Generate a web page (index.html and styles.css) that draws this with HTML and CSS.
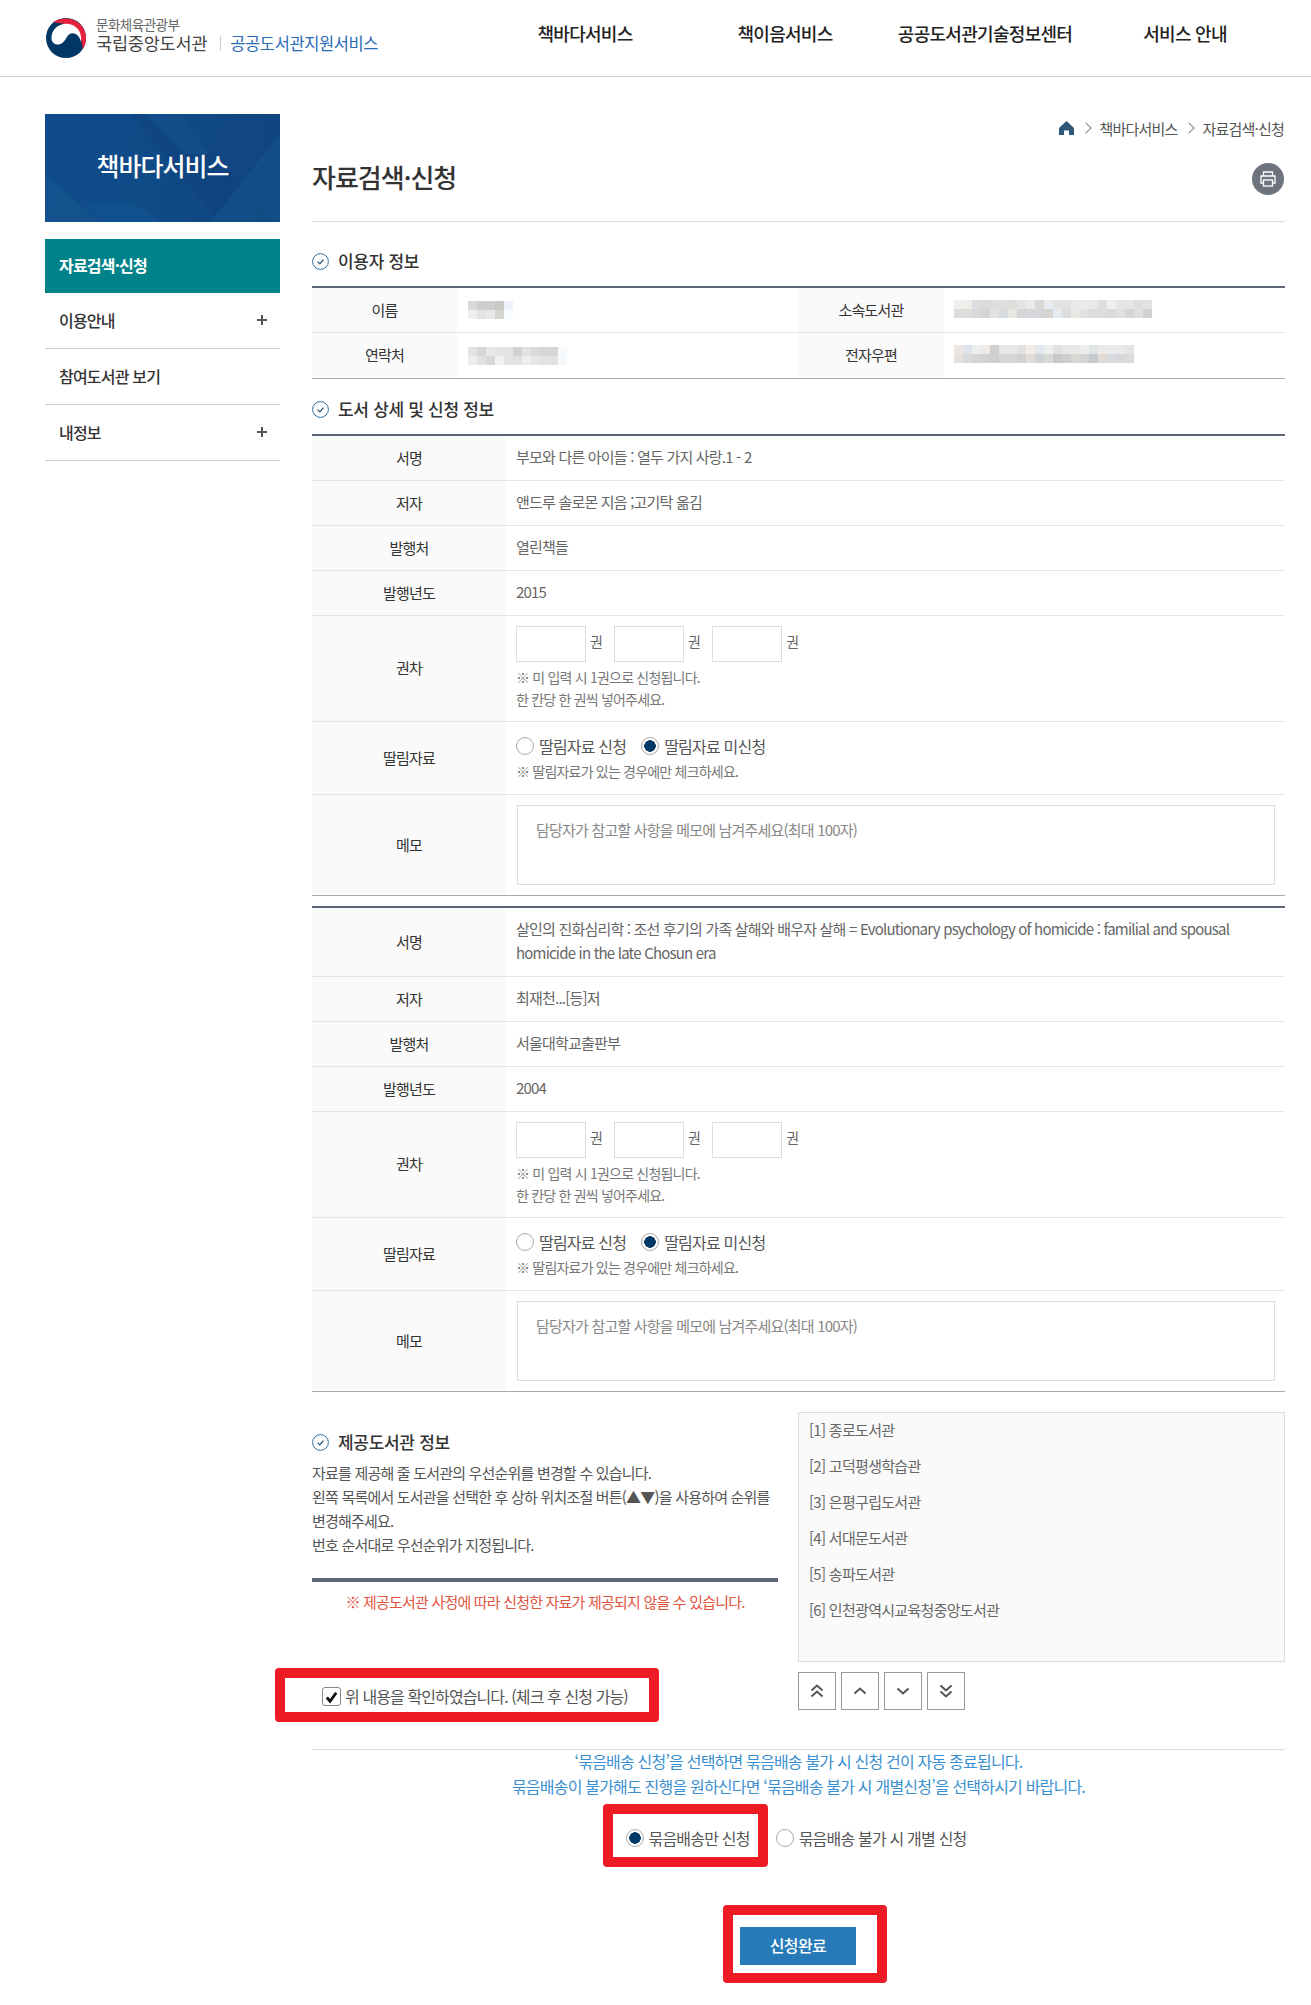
FILE: index.html
```html
<!DOCTYPE html>
<html lang="ko">
<head>
    <meta charset="UTF-8">
    <meta name="viewport" content="width=device-width, initial-scale=1.0">
    <title>자료검색·신청 - 책바다서비스</title>
    <link rel="stylesheet" href="styles.css">
</head>
<body>
<div class="page">
    <header class="header">
        <a class="logo" href="#">
            <svg class="emblem" viewBox="0 0 42 40" width="42" height="40">
                <circle cx="21" cy="20" r="20" fill="#003764"/>
                <path d="M8 4.5 C14 0 23 -1 30 2.5 C37 6 41 13 41 20 C41 25 39.5 29 37.5 31.5 C38 22 33 12 25 8 C19 5 13 5 8 4.5 Z" fill="#e6213c"/>
                <path d="M6.5 21 C6 12 13 5.5 22 5.8 C31 6.2 37.5 13.5 36 24 C34.5 16.5 28 13.5 24 16.5 C21 19 20 25 14 26.5 C10 27 7 24.5 6.5 21 Z" fill="#fff"/>
            </svg>
            <span class="logo-text">
                <span class="logo-sup">문화체육관광부</span>
                <span class="logo-main">국립중앙도서관</span>
            </span>
            <span class="logo-sub">공공도서관지원서비스</span>
        </a>
        <nav class="gnb">
            <a href="#">책바다서비스</a>
            <a href="#">책이음서비스</a>
            <a href="#">공공도서관기술정보센터</a>
            <a href="#">서비스 안내</a>
        </nav>
    </header>

    <div class="wrap">
        <aside class="side">
            <div class="side-banner">
                <svg class="side-art" viewBox="0 0 235 108" width="235" height="108" preserveAspectRatio="none">
                    <polygon points="85,0 130,0 235,108 175,108" fill="#0e3f7a" opacity="0.4"/>
                    <polygon points="100,0 135,0 165,40 140,40" fill="#12548f" opacity="0.6"/>
                    <polygon points="0,108 0,60 55,108" fill="#15578f" opacity="0.6"/>
                    <polygon points="40,90 90,90 118,108 55,108" fill="#11528f" opacity="0.7"/>
                    <polygon points="235,20 235,108 165,108" fill="#125189" opacity="0.7"/>
                </svg>
                <span>책바다서비스</span>
            </div>
            <ul class="side-menu">
                <li class="on"><a href="#">자료검색·신청</a></li>
                <li><a href="#">이용안내<span class="plus"></span></a></li>
                <li><a href="#">참여도서관 보기</a></li>
                <li><a href="#">내정보<span class="plus"></span></a></li>
            </ul>
        </aside>

        <main class="main">
            <div class="crumb">
                <svg viewBox="0 0 15 14" width="15" height="14"><path d="M7.5 0 L15 7 V14 H10 V9.5 H5 V14 H0 V7 Z" fill="#2f5878"/></svg>
                <i class="crumb-arrow"></i>
                <span>책바다서비스</span>
                <i class="crumb-arrow"></i>
                <span>자료검색·신청</span>
            </div>
            <div class="title-row">
                <h1>자료검색·신청</h1>
                <button class="print" type="button" title="인쇄">
                    <svg viewBox="0 0 16 16" width="16" height="16" fill="none" stroke="#fff" stroke-width="1.3">
                        <path d="M3.5 5 V1 H12.5 V5"/>
                        <path d="M3.5 12 H1 V5 H15 V12 H12.5"/>
                        <rect x="3.5" y="9" width="9" height="6"/>
                    </svg>
                </button>
            </div>

            <h2 class="sec-head sec-first"><svg class="tick" viewBox="0 0 17 17" width="17" height="17" fill="none"><circle cx="8.5" cy="8.5" r="7.9" stroke="#2b6f9f" stroke-width="1"/><path d="M5.6 8.6 L7.8 10.8 L11.5 6.6" stroke="#1b4f78" stroke-width="1.2"/></svg>이용자 정보</h2>
            <table class="tbl tbl-user">
                <colgroup><col class="c-user-th"><col class="c-user-td"><col class="c-user-th2"><col></colgroup>
                <tr class="r-45">
                    <th>이름</th><td class="td-form td-user"><span class="mosaic m-name"></span></td>
                    <th>소속도서관</th><td class="td-form td-user"><span class="mosaic m-lib"></span></td>
                </tr>
                <tr class="r-46 last">
                    <th>연락처</th><td class="td-form td-user"><span class="mosaic m-tel"></span></td>
                    <th>전자우편</th><td class="td-form td-user"><span class="mosaic m-mail"></span></td>
                </tr>
            </table>

            <h2 class="sec-head sec-second"><svg class="tick" viewBox="0 0 17 17" width="17" height="17" fill="none"><circle cx="8.5" cy="8.5" r="7.9" stroke="#2b6f9f" stroke-width="1"/><path d="M5.6 8.6 L7.8 10.8 L11.5 6.6" stroke="#1b4f78" stroke-width="1.2"/></svg>도서 상세 및 신청 정보</h2>
            <table class="tbl tbl-book">
                <colgroup><col class="c-book-th"><col></colgroup>
                <tr class="r-45"><th>서명</th><td>부모와 다른 아이들 : 열두 가지 사랑.1 - 2</td></tr>
                <tr class="r-45"><th>저자</th><td>앤드루 솔로몬 지음 ;고기탁 옮김</td></tr>
                <tr class="r-45"><th>발행처</th><td>열린책들</td></tr>
                <tr class="r-45"><th>발행년도</th><td>2015</td></tr>
                <tr class="r-106">
                    <th>권차</th>
                    <td class="td-form">
                        <div class="vols">
                            <label><input type="text"> 권</label>
                            <label><input type="text"> 권</label>
                            <label><input type="text"> 권</label>
                        </div>
                        <p class="note">※ 미 입력 시 1권으로 신청됩니다.<br>한 칸당 한 권씩 넣어주세요.</p>
                    </td>
                </tr>
                <tr class="r-73">
                    <th>딸림자료</th>
                    <td class="td-form">
                        <div class="radios">
                            <label><span class="radio"></span>딸림자료 신청</label>
                            <label><span class="radio on"></span>딸림자료 미신청</label>
                        </div>
                        <p class="note note-tight">※ 딸림자료가 있는 경우에만 체크하세요.</p>
                    </td>
                </tr>
                <tr class="r-101 last">
                    <th>메모</th>
                    <td class="td-form"><textarea placeholder="담당자가 참고할 사항을 메모에 남겨주세요(최대 100자)"></textarea></td>
                </tr>
            </table>

            <table class="tbl tbl-book tbl-next">
                <colgroup><col class="c-book-th"><col></colgroup>
                <tr class="r-69"><th>서명</th><td>살인의 진화심리학 : 조선 후기의 가족 살해와 배우자 살해 = Evolutionary psychology of homicide : familial and spousal homicide in the late Chosun era</td></tr>
                <tr class="r-45"><th>저자</th><td>최재천...[등]저</td></tr>
                <tr class="r-45"><th>발행처</th><td>서울대학교출판부</td></tr>
                <tr class="r-45"><th>발행년도</th><td>2004</td></tr>
                <tr class="r-106">
                    <th>권차</th>
                    <td class="td-form">
                        <div class="vols">
                            <label><input type="text"> 권</label>
                            <label><input type="text"> 권</label>
                            <label><input type="text"> 권</label>
                        </div>
                        <p class="note">※ 미 입력 시 1권으로 신청됩니다.<br>한 칸당 한 권씩 넣어주세요.</p>
                    </td>
                </tr>
                <tr class="r-73">
                    <th>딸림자료</th>
                    <td class="td-form">
                        <div class="radios">
                            <label><span class="radio"></span>딸림자료 신청</label>
                            <label><span class="radio on"></span>딸림자료 미신청</label>
                        </div>
                        <p class="note note-tight">※ 딸림자료가 있는 경우에만 체크하세요.</p>
                    </td>
                </tr>
                <tr class="r-101 last">
                    <th>메모</th>
                    <td class="td-form"><textarea placeholder="담당자가 참고할 사항을 메모에 남겨주세요(최대 100자)"></textarea></td>
                </tr>
            </table>

            <section class="provider">
                <div class="provider-left">
                    <h2 class="sec-head sec-third"><svg class="tick" viewBox="0 0 17 17" width="17" height="17" fill="none"><circle cx="8.5" cy="8.5" r="7.9" stroke="#2b6f9f" stroke-width="1"/><path d="M5.6 8.6 L7.8 10.8 L11.5 6.6" stroke="#1b4f78" stroke-width="1.2"/></svg>제공도서관 정보</h2>
                    <p class="desc">자료를 제공해 줄 도서관의 우선순위를 변경할 수 있습니다.<br>왼쪽 목록에서 도서관을 선택한 후 상하 위치조절 버튼(▲▼)을 사용하여 순위를 변경해주세요.<br>번호 순서대로 우선순위가 지정됩니다.</p>
                    <p class="warn">※ 제공도서관 사정에 따라 신청한 자료가 제공되지 않을 수 있습니다.</p>
                    <label class="agree">
                        <span class="check"><svg viewBox="0 0 18 18" width="18" height="18"><path d="M4 9.5 L7.5 13.5 L14 4.5" fill="none" stroke="#111" stroke-width="3"/></svg></span>
                        위 내용을 확인하였습니다. (체크 후 신청 가능)
                    </label>
                </div>
                <div class="provider-right">
                    <ul class="lib-list">
                        <li>[1] 종로도서관</li>
                        <li>[2] 고덕평생학습관</li>
                        <li>[3] 은평구립도서관</li>
                        <li>[4] 서대문도서관</li>
                        <li>[5] 송파도서관</li>
                        <li>[6] 인천광역시교육청중앙도서관</li>
                    </ul>
                    <div class="order-btns">
                        <button type="button"><svg viewBox="0 0 14 14" width="14" height="14" fill="none" stroke="#555" stroke-width="2"><path d="M1.5 6.5 L7 1.5 L12.5 6.5 M1.5 12.5 L7 7.5 L12.5 12.5"/></svg></button>
                        <button type="button"><svg viewBox="0 0 14 14" width="14" height="14" fill="none" stroke="#555" stroke-width="2"><path d="M1.5 9.5 L7 4.5 L12.5 9.5"/></svg></button>
                        <button type="button"><svg viewBox="0 0 14 14" width="14" height="14" fill="none" stroke="#555" stroke-width="2"><path d="M1.5 4.5 L7 9.5 L12.5 4.5"/></svg></button>
                        <button type="button"><svg viewBox="0 0 14 14" width="14" height="14" fill="none" stroke="#555" stroke-width="2"><path d="M1.5 1.5 L7 6.5 L12.5 1.5 M1.5 7.5 L7 12.5 L12.5 7.5"/></svg></button>
                    </div>
                </div>
            </section>

            <p class="bundle-info">‘묶음배송 신청’을 선택하면 묶음배송 불가 시 신청 건이 자동 종료됩니다.<br>묶음배송이 불가해도 진행을 원하신다면 ‘묶음배송 불가 시 개별신청’을 선택하시기 바랍니다.</p>
            <div class="radios bundle-radios">
                <label><span class="radio on"></span>묶음배송만 신청</label>
                <label><span class="radio"></span>묶음배송 불가 시 개별 신청</label>
            </div>
            <div class="submit-row"><button class="submit" type="button">신청완료</button></div>
        </main>
    </div>

    <!-- 빨간 표시 -->
    <div class="mark mark-agree"></div>
    <div class="mark mark-bundle"></div>
    <div class="mark mark-submit"></div>
</div>
</body>
</html>
```

FILE: styles.css
```css
* {
    box-sizing: border-box;
}

body {
    margin: 0;
    background: #fff;
    font-family: "Noto Sans CJK KR", "Noto Sans", sans-serif;
    font-size: 15px;
    color: #555;
    letter-spacing: -0.8px;
}

a {
    color: inherit;
    text-decoration: none;
}

.page {
    position: relative;
    width: 1311px;
    height: 2005px;
    overflow: hidden;
}

/* header */
.header {
    display: flex;
    align-items: center;
    height: 77px;
    padding: 0 26px 8px 45px;
    border-bottom: 1px solid #ccc;
}

.logo {
    display: flex;
    align-items: center;
}

.emblem {
    margin: 8px 9px 0 0;
}

.logo-text {
    display: flex;
    flex-direction: column;
    margin-top: 1px;
}

.logo-sup {
    font-size: 13.5px;
    line-height: 15px;
    color: #666;
    letter-spacing: -0.5px;
}

.logo-main {
    font-size: 17.5px;
    line-height: 21px;
    color: #444;
    letter-spacing: -0.2px;
}

.logo-sub {
    margin: 18px 0 0 13px;
    padding-left: 9px;
    font-size: 16.5px;
    line-height: 15px;
    color: #2a6bb5;
    letter-spacing: -0.4px;
    border-left: 1px solid #ccc;
}

.gnb {
    display: flex;
    margin: 0 0 2px auto;
}

.gnb a {
    width: 200px;
    text-align: center;
    font-size: 18px;
    font-weight: 500;
    color: #222;
    letter-spacing: -0.7px;
}

/* layout */
.wrap {
    display: flex;
    padding: 37px 26px 0 45px;
}

.side {
    flex: none;
    width: 235px;
    margin-right: 32px;
}

.main {
    flex: 1;
    min-width: 0;
}

/* side */
.side-banner {
    position: relative;
    display: flex;
    align-items: center;
    justify-content: center;
    height: 108px;
    background: linear-gradient(100deg, #104c8d, #0f4a86 50%, #114480);
    color: #fff;
    font-size: 25px;
    font-weight: 500;
    letter-spacing: -1px;
    overflow: hidden;
}

.side-art {
    position: absolute;
    top: 0;
    left: 0;
}

.side-banner span {
    position: relative;
    margin-bottom: 6px;
}

.side-menu {
    margin: 17px 0 0;
    padding: 0;
    list-style: none;
}

.side-menu a {
    display: flex;
    align-items: center;
    justify-content: space-between;
    height: 56px;
    padding: 0 13px 1px 14px;
    font-size: 16px;
    font-weight: 500;
    color: #333;
    border-bottom: 1px solid #ccc;
}

.side-menu li.on a {
    height: 54px;
    padding-bottom: 2px;
    background: #00828a;
    color: #fff;
    font-weight: 700;
    border-bottom: 0;
}

.plus {
    position: relative;
    width: 10px;
    height: 10px;
    background:
        linear-gradient(#555, #555) center / 10px 2px no-repeat,
        linear-gradient(#555, #555) center / 2px 10px no-repeat;
}

/* title */
.crumb {
    display: flex;
    align-items: center;
    justify-content: flex-end;
    height: 28px;
    padding-right: 1px;
    font-size: 15px;
    color: #555;
}

.crumb svg {
    margin-right: 1px;
}

.crumb-arrow {
    width: 8px;
    height: 8px;
    margin: 0 10px 0 7px;
    border-top: 1px solid #888;
    border-right: 1px solid #888;
    transform: rotate(45deg);
}

.title-row {
    display: flex;
    align-items: center;
    justify-content: space-between;
    height: 80px;
    padding-bottom: 5px;
    border-bottom: 1px solid #ddd;
}

.title-row h1 {
    margin: 0 0 6px;
    font-size: 26px;
    font-weight: 500;
    color: #333;
    letter-spacing: -1px;
}

.print {
    display: flex;
    align-items: center;
    justify-content: center;
    width: 32px;
    height: 32px;
    margin-right: 1px;
    padding: 0;
    border: 0;
    border-radius: 50%;
    background: #6d737f;
}

.sec-head {
    display: flex;
    align-items: center;
    height: 50px;
    margin: 0;
    padding-bottom: 2px;
    font-size: 17px;
    font-weight: 500;
    color: #333;
    letter-spacing: -0.3px;
}

.tick {
    margin: 2px 9px 0 0;
}

.sec-first {
    margin-top: 14px;
}

.sec-second {
    margin-top: 5px;
}

.sec-third {
    height: 38px;
    margin-top: 11px;
    padding-bottom: 1px;
}

/* tables */
.tbl {
    width: 100%;
    table-layout: fixed;
    border-collapse: separate;
    border-spacing: 0;
    border-top: 2px solid #5d6579;
}

.tbl th,
.tbl td {
    padding: 0;
    font-weight: 400;
    border-bottom: 1px solid #e6e6e6;
}

.tbl th {
    padding-bottom: 2px;
    background: #fafafa;
    color: #333;
    text-align: center;
}

.tbl td {
    padding: 0 10px 3px 10px;
    line-height: 24px;
    color: #666;
}

.tbl td.td-form {
    padding-bottom: 0;
}

.tbl td.td-user {
    padding-left: 11px;
}

.tbl .r-106 td.td-form {
    padding-bottom: 2px;
}

.tbl .r-101 td.td-form {
    padding-left: 11px;
}

.tbl .last th,
.tbl .last td {
    border-bottom-color: #aaa;
}

.c-user-th { width: 145px; }
.c-user-td { width: 341px; }
.c-user-th2 { width: 146px; }
.c-book-th { width: 194px; }

.r-45 th, .r-45 td { height: 45px; }
.r-46 th, .r-46 td { height: 46px; }
.r-69 th, .r-69 td { height: 69px; }
.r-73 th, .r-73 td { height: 73px; }
.r-101 th, .r-101 td { height: 101px; }
.r-106 th, .r-106 td { height: 106px; }

.tbl-next {
    margin-top: 10px;
}

.vols {
    display: flex;
    gap: 12px;
}

.vols label {
    display: flex;
    gap: 4px;
    align-items: flex-start;
    line-height: 30px;
    font-size: 14px;
}

.vols input {
    width: 70px;
    height: 36px;
    padding: 0;
    border: 1px solid #ddd;
    background: #fff;
}

.note {
    margin: 4px 0 0;
    font-size: 14px;
    line-height: 22px;
    color: #777;
}

.note-tight {
    margin-top: 2px;
}

.radios {
    display: flex;
    gap: 15px;
}

.radios label {
    display: flex;
    align-items: center;
    gap: 5px;
    height: 24px;
    font-size: 16px;
    color: #555;
}

.radio {
    width: 18px;
    height: 18px;
    border: 1px solid #aaa;
    border-radius: 50%;
    background: #fff;
}

.radio.on {
    background: radial-gradient(circle, #003764 0 5.5px, #fff 6px);
}

textarea {
    display: block;
    width: 100%;
    height: 80px;
    padding: 12px 18px;
    border: 1px solid #ddd;
    font-family: inherit;
    font-size: 15px;
    line-height: 24px;
    letter-spacing: -0.8px;
    resize: none;
}

textarea::placeholder {
    color: #888;
    opacity: 1;
}

/* provider */
.provider {
    display: flex;
    gap: 20px;
    padding: 20px 0 39px;
    border-bottom: 1px solid #ddd;
}

.provider-left {
    width: 466px;
}

.provider-right {
    flex: 1;
}

.desc {
    margin: 0;
    line-height: 24px;
    color: #555;
}

.warn {
    margin: 21px 0 0;
    padding-top: 8px;
    border-top: 4px solid #5d6579;
    line-height: 24px;
    color: #e2553f;
    text-align: center;
}

.agree {
    display: flex;
    align-items: center;
    gap: 4px;
    height: 24px;
    margin-top: 70px;
    padding-left: 10px;
    font-size: 16px;
    letter-spacing: -0.9px;
    color: #555;
}

.check {
    display: flex;
    width: 19px;
    height: 19px;
    border: 1px solid #888;
    border-radius: 3px;
}

.lib-list {
    height: 250px;
    margin: 0;
    padding: 0 10px;
    list-style: none;
    background: #fafafa;
    border: 1px solid #ddd;
    letter-spacing: -0.7px;
}

.lib-list li {
    height: 36px;
    line-height: 33px;
    color: #666;
}

.order-btns {
    display: flex;
    gap: 5px;
    margin-top: 10px;
}

.order-btns button {
    display: flex;
    align-items: center;
    justify-content: center;
    width: 38px;
    height: 38px;
    padding: 0;
    border: 1px solid #999;
    background: #fff;
}

/* bundle */
.bundle-info {
    margin: -1px 0 0;
    font-size: 16px;
    line-height: 25px;
    color: #3a8fd0;
    text-align: center;
}

.bundle-radios {
    justify-content: center;
    gap: 26px;
    margin: 27px 5px 0 0;
}

.submit-row {
    display: flex;
    justify-content: center;
    margin-top: 77px;
}

.submit {
    width: 116px;
    height: 38px;
    margin-right: 1px;
    padding: 0 0 2px;
    border: 0;
    background: #277ab8;
    color: #fff;
    font-family: inherit;
    font-size: 16px;
    font-weight: 500;
    letter-spacing: -0.6px;
}

/* red marks */
.mark {
    position: absolute;
    border: 10px solid #ed1c24;
    border-radius: 4px;
}

.mark-agree {
    top: 1668px;
    left: 275px;
    width: 384px;
    height: 54px;
}

.mark-bundle {
    top: 1804px;
    left: 603px;
    width: 165px;
    height: 63px;
}

.mark-submit {
    top: 1905px;
    left: 723px;
    width: 164px;
    height: 78px;
}

/* 블러 처리된 개인정보 */
.mosaic {
    display: block;
    height: 18px;
    background-repeat: no-repeat;
    background-size: 100% 9px;
    background-position: 0 0, 0 9px;
}

.m-name {
    width: 45px;
    background-image:
        linear-gradient(90deg, #d8d8d8 0 9px, #cfcfcf 0 18px, #cdcdcd 0 27px, #c9c9c5 0 36px, #eef2fa 0),
        linear-gradient(90deg, #f0f0ee 0 9px, #e4e4e4 0 18px, #e8e8e8 0 27px, #d4d4d0 0 36px, #f8fbff 0);
}

.m-tel {
    width: 99px;
    background-image:
        linear-gradient(90deg, #dfe3e6 0 9px, #d6d6d6 0 18px, #e8e8e8 0 27px, #e4e4e4 0 45px, #d2d2d4 0 54px, #e0e2e4 0 63px, #dcdad8 0 72px, #d2d8da 0 81px, #d8d4d2 0 90px, #f6fafc 0),
        linear-gradient(90deg, #eeeeee 0 9px, #e2e2e2 0 18px, #d8d8d8 0 27px, #f0f0f0 0 36px, #e4e4e4 0 45px, #e2e2e2 0 54px, #eeeeee 0 63px, #e6e6e6 0 72px, #e2e2e2 0 90px, #f4f8fa 0);
}

.m-lib {
    width: 198px;
    margin: 0 0 3px -1px;
    background-image:
        linear-gradient(90deg, #f0f0ee 0 9px, #eeedea 0 18px, #dcdee0 0 27px, #dcdada 0 36px, #dededc 0 54px, #dcdeda 0 63px, #e4e4e6 0 72px, #eaeaea 0 81px, #dcd6d4 0 90px, #e6ecf2 0 99px, #e2e4e4 0 108px, #e4e2e0 0 117px, #e8eaec 0 126px, #eaecec 0 135px, #e8e8e6 0 144px, #e0e0e0 0 153px, #eef0f0 0 162px, #e6e6e6 0 180px, #dedede 0 189px, #e0e2e4 0),
        linear-gradient(90deg, #dcdcda 0 18px, #d6dade 0 27px, #d6d4d2 0 36px, #e2e2e2 0 45px, #d8dcde 0 54px, #e6e6e2 0 63px, #d6d6da 0 90px, #d8d4d2 0 99px, #e4eaee 0 108px, #dcdedc 0 117px, #eae8e4 0 126px, #dfe1e3 0 135px, #dcdcdc 0 144px, #dcdcd8 0 153px, #d8dadc 0 162px, #e0e0e0 0 171px, #d6d6d6 0 180px, #e0e0de 0 189px, #d0d2d4 0);
}

.m-mail {
    width: 180px;
    margin: 0 0 3px -1px;
    background-image:
        linear-gradient(90deg, #eae6e2 0 9px, #dfe3ec 0 18px, #eeeeec 0 27px, #eeeae8 0 36px, #cfcfcf 0 45px, #e8eaea 0 63px, #e0e0e0 0 72px, #f2ebe6 0 81px, #e2e8ee 0 90px, #eeeeee 0 99px, #e2e2e0 0 108px, #e8e8e8 0 126px, #eceeee 0 135px, #e0e4e4 0 144px, #ecebe9 0 153px, #eaeaea 0 171px, #e4e6e6 0),
        linear-gradient(90deg, #e4e0da 0 9px, #d8dadc 0 18px, #d4d6d4 0 27px, #d0d2d4 0 36px, #cfcfcf 0 45px, #d4d6d6 0 63px, #d2d2d0 0 72px, #e2dcd8 0 81px, #ccd2d8 0 90px, #d8d8d4 0 99px, #c8c8ca 0 108px, #d0cecc 0 117px, #d8d8d4 0 126px, #d4d4d6 0 135px, #c6cace 0 144px, #e2dcd6 0 153px, #d8dce0 0 162px, #d6d8da 0 171px, #dcdcdc 0);
}
```
